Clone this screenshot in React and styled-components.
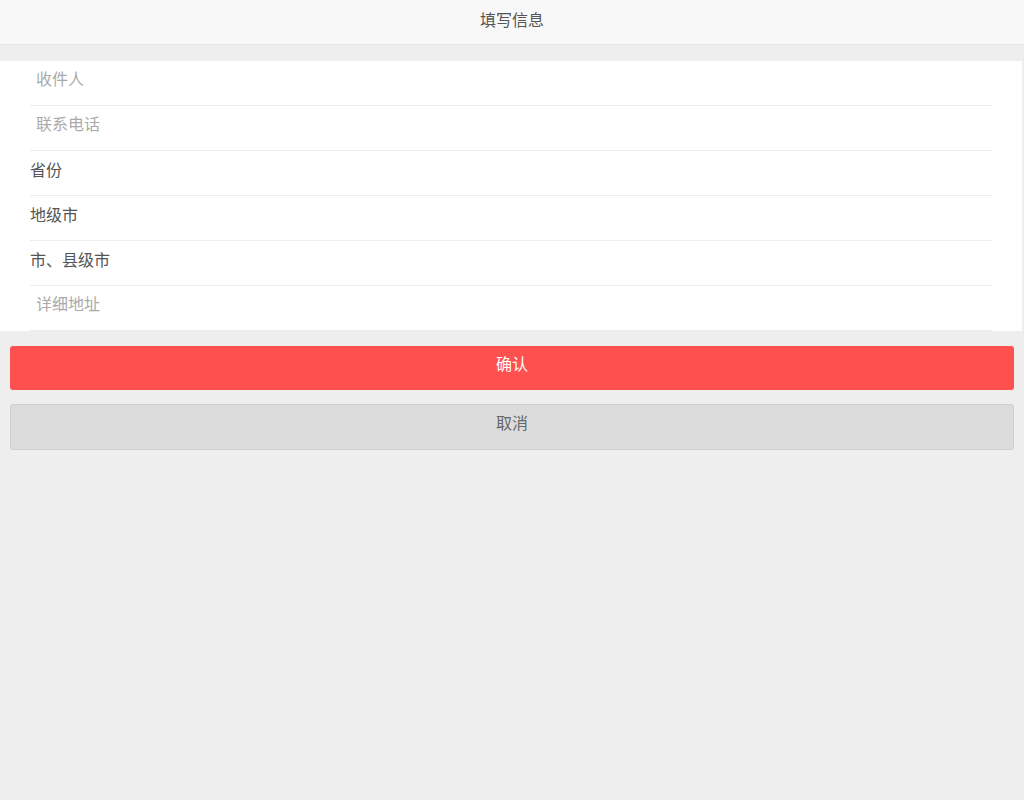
import React from 'react'
import styled, { createGlobalStyle } from 'styled-components'

const FIELDS = [
  { label: '收件人', kind: 'input' },
  { label: '联系电话', kind: 'input' },
  { label: '省份', kind: 'select' },
  { label: '地级市', kind: 'select' },
  { label: '市、县级市', kind: 'select' },
  { label: '详细地址', kind: 'input' },
]

export default function App() {
  return (
    <>
      <GlobalStyle />
      <Page>
        <Header>填写信息</Header>
        <Form>
          {FIELDS.map((f) => (
            <Row key={f.label}>
              {f.kind === 'input' ? (
                <Field placeholder={f.label} />
              ) : (
                <SelectLabel>{f.label}</SelectLabel>
              )}
            </Row>
          ))}
        </Form>
        <Actions>
          <Button primary>确认</Button>
          <Button>取消</Button>
        </Actions>
      </Page>
    </>
  )
}

const GlobalStyle = createGlobalStyle`
  html, body {
    margin: 0;
    padding: 0;
    background: #eeeeee;
    font-family: "Liberation Sans", "Noto Sans CJK SC", sans-serif;
  }
`

const Page = styled.div`
  min-height: 800px;
  background: #eeeeee;
`

const Header = styled.div`
  height: 44px;
  line-height: 41px;
  text-align: center;
  font-size: 16px;
  color: #555;
  background: #f8f8f8;
  border-bottom: 1px solid #e6e6e6;
`

const Form = styled.div`
  margin: 16px 2px 0 0;
  padding-left: 30px;
  padding-right: 30px;
  background: #fff;
`

const Row = styled.div`
  height: 44px;
  display: flex;
  align-items: center;
  border-bottom: 1px solid #ececec;
`

const Field = styled.input`
  flex: 1;
  border: none;
  outline: none;
  padding: 0 6px;
  margin-top: -6px;
  font-family: inherit;
  font-size: 16px;
  color: #333;
  background: transparent;

  &::placeholder {
    color: #aaa;
  }
`

const SelectLabel = styled.div`
  margin-top: -9px;
  font-size: 16px;
  color: #555;
`

const Actions = styled.div`
  display: flex;
  flex-direction: column;
  gap: 14px;
  padding: 15px 10px 0;
`

const Button = styled.div`
  height: 44px;
  line-height: 38px;
  text-align: center;
  font-size: 16px;
  border-radius: 3px;
  color: ${(p) => (p.primary ? '#fff' : '#666')};
  background: ${(p) => (p.primary ? '#ff5050' : '#dcdcdc')};
  border: ${(p) => (p.primary ? 'none' : '1px solid #d0d0d0')};
`
